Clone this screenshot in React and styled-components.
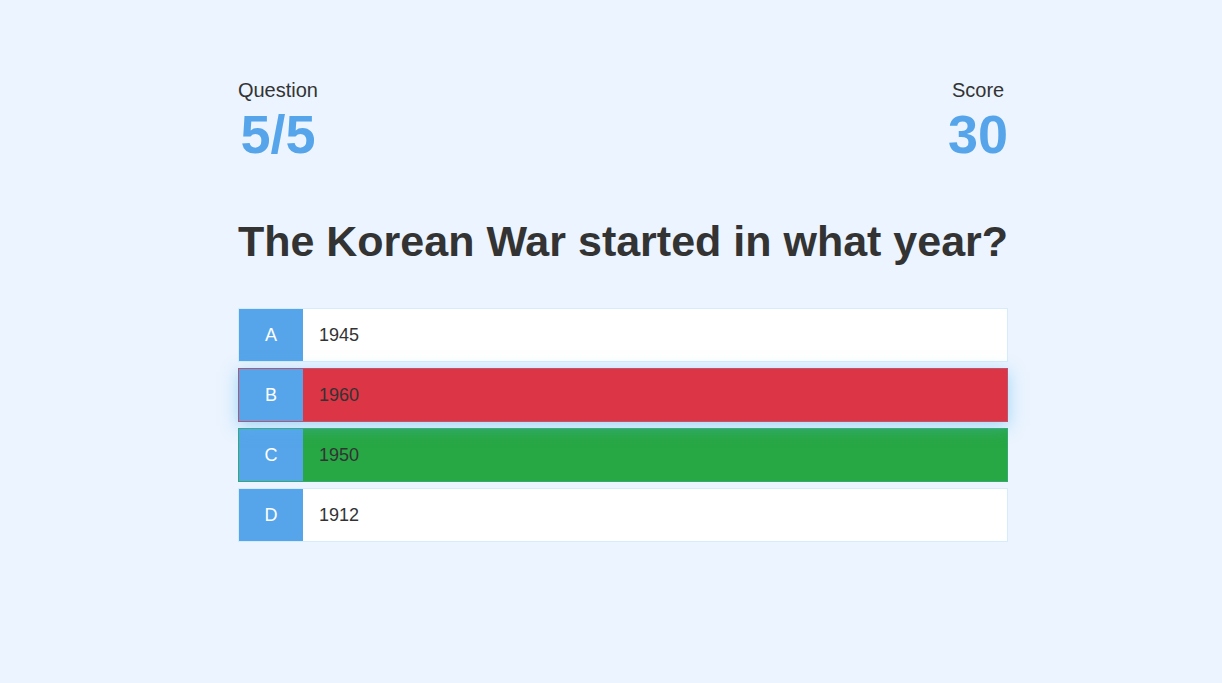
import React from "react";
import styled, { createGlobalStyle } from "styled-components";

const GlobalStyle = createGlobalStyle`
  * { box-sizing: border-box; margin: 0; padding: 0; }
  body {
    background: #ebf4ff;
    color: #333;
    font-family: Arial, "Liberation Sans", sans-serif;
  }
`;

const Page = styled.main`
  min-height: 100vh;
  display: flex;
  flex-direction: column;
  align-items: center;
  padding: 78px 32px 32px 56px;
`;

const Game = styled.div`
  display: flex;
  flex-direction: column;
`;

const Hud = styled.header`
  display: flex;
  justify-content: space-between;
  margin-bottom: 51px;
`;

const HudItem = styled.div`
  text-align: center;
`;

const HudPrefix = styled.p`
  font-size: 20px;
  line-height: 24px;
`;

const HudValue = styled.p`
  color: #56a5eb;
  font-size: 54px;
  font-weight: 700;
  line-height: 64px;
`;

const Question = styled.h1`
  font-size: 43px;
  line-height: 48px;
  margin-bottom: 43px;
`;

const Choices = styled.div`
  display: flex;
  flex-direction: column;
  gap: 6px;
`;

const backgrounds = { idle: "#fff", incorrect: "#dc3545", correct: "#28a745" };

const Choice = styled.button`
  position: relative;
  z-index: ${({ $raised }) => ($raised ? 1 : 0)};
  display: flex;
  width: 100%;
  border: 1px solid rgba(86, 185, 235, 0.25);
  background: ${({ $state }) => backgrounds[$state]};
  color: #333;
  font: inherit;
  font-size: 18px;
  line-height: 20px;
  text-align: left;
  cursor: pointer;
  box-shadow: ${({ $raised }) => ($raised ? "0 4px 15px rgba(86, 185, 235, 0.5)" : "none")};
`;

const Letter = styled.span`
  width: 64px;
  padding: 16px 0;
  background: #56a5eb;
  color: #fff;
  text-align: center;
`;

const Answer = styled.span`
  flex: 1;
  padding: 16px;
`;

const choices = [
  { letter: "A", text: "1945", state: "idle" },
  { letter: "B", text: "1960", state: "incorrect", raised: true },
  { letter: "C", text: "1950", state: "correct" },
  { letter: "D", text: "1912", state: "idle" },
];

export default function App() {
  return (
    <>
      <GlobalStyle />
      <Page>
        <Game>
          <Hud>
            <HudItem>
              <HudPrefix>Question</HudPrefix>
              <HudValue>5/5</HudValue>
            </HudItem>
            <HudItem>
              <HudPrefix>Score</HudPrefix>
              <HudValue>30</HudValue>
            </HudItem>
          </Hud>
          <Question>The Korean War started in what year?</Question>
          <Choices>
            {choices.map(({ letter, text, state, raised }) => (
              <Choice key={letter} type="button" $state={state} $raised={raised}>
                <Letter>{letter}</Letter>
                <Answer>{text}</Answer>
              </Choice>
            ))}
          </Choices>
        </Game>
      </Page>
    </>
  );
}
